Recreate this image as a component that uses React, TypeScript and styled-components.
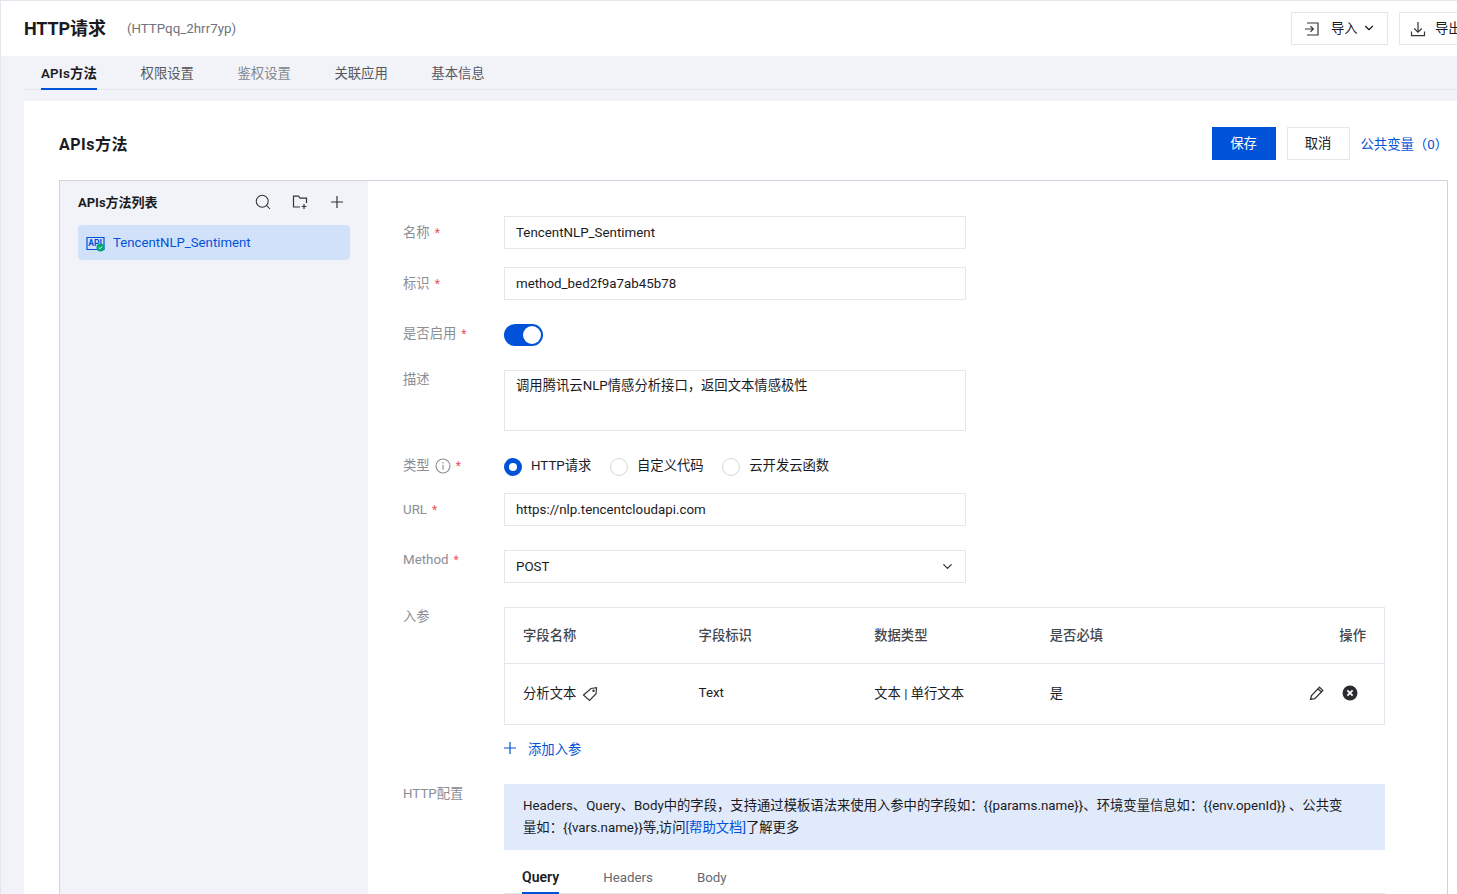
import React from "react";
import styled, { createGlobalStyle } from "styled-components";
import { ChevronDown, Search } from "lucide-react";

const GlobalStyle = createGlobalStyle`
  html, body {
    margin: 0;
    padding: 0;
    height: 100%;
    overflow: hidden;
    background: #f2f3f8;
  }
  * {
    box-sizing: border-box;
  }
  body {
    font-family: Roboto, "Noto Sans CJK SC", sans-serif;
    font-size: 13.33px;
    color: #1a1b1f;
  }
`;

const Page = styled.div`
  width: 1457px;
  height: 894px;
  overflow: hidden;
  border-top: 1px solid #e4e6ee;
  border-left: 1px solid #e4e6ee;
  background: #f2f3f8;
`;

const Header = styled.header`
  height: 55px;
  background: #fff;
  display: flex;
  align-items: center;
  padding-left: 23px;
  width: 1520px;
`;

const TitleGroup = styled.div`
  flex: 0 0 1267px;
  display: flex;
  align-items: center;
  gap: 21px;
`;

const Title = styled.h1`
  margin: 0;
  font-size: 18px;
  line-height: 24px;
  font-weight: 700;
  letter-spacing: -0.1px;
  color: #1a1a1f;
`;

const SubTitle = styled.span`
  color: #70737b;
`;

const HeaderButton = styled.button<{ $pad: number; $gap: number }>`
  flex: 0 0 97px;
  height: 33px;
  margin-right: 11px;
  border: 1px solid #e4e6ee;
  background: #fff;
  padding: 0 0 2px ${props => props.$pad}px;
  display: flex;
  align-items: center;
  gap: ${props => props.$gap}px;
  font: inherit;
  color: #1a1b1f;
`;

const ButtonChevron = styled(ChevronDown)`
  margin-left: -7px;
`;

const TabBar = styled.nav`
  height: 34px;
  margin-left: 23px;
  padding-left: 17px;
  display: flex;
  gap: 43.6px;
  border-bottom: 1px solid #e4e6ee;
`;

const TabItem = styled.span<{ $active?: boolean; $muted?: boolean }>`
  height: 34px;
  padding-top: 1px;
  line-height: 33px;
  font-weight: ${props => (props.$active ? 600 : 400)};
  letter-spacing: ${props => (props.$active ? "0.2px" : "0")};
  color: ${props => (props.$active ? "#1a1b1f" : props.$muted ? "#84878f" : "#55585f")};
  border-bottom: ${props => (props.$active ? "2px solid #0052d9" : "none")};
`;

const Card = styled.main`
  margin: 11px 0 0 23px;
  height: 800px;
  background: #fff;
  padding: 26px 0 0 35px;
`;

const CardHead = styled.div`
  height: 33px;
  display: flex;
  align-items: center;
  padding-right: 9px;
`;

const CardTitle = styled.h2`
  margin: 0 auto 2px 0;
  font-size: 16px;
  font-weight: 700;
  letter-spacing: 0.5px;
  color: #1a1a1f;
`;

const PrimaryButton = styled.button`
  width: 64px;
  height: 33px;
  border: none;
  padding: 0 0 2px;
  background: #0052d9;
  color: #fff;
  font: inherit;
  margin-right: 11px;
`;

const GhostButton = styled.button`
  width: 63px;
  height: 33px;
  border: 1px solid #e4e6ee;
  padding: 0 0 2px;
  background: #fff;
  color: #1a1b1f;
  font: inherit;
  margin-right: 11px;
`;

const LinkText = styled.span`
  color: #0052d9;
  white-space: pre;
`;

const Panel = styled.section`
  margin: 20px 9px 0 0;
  height: 720px;
  border: 1px solid #d0d3de;
  display: flex;
`;

const Sidebar = styled.aside`
  flex: 0 0 308px;
  background: #f2f3f8;
  padding: 10px 18px 0 18px;
`;

const SideHead = styled.div`
  height: 22px;
  display: flex;
  align-items: center;
`;

const SideTitle = styled.span`
  flex: 1;
  padding-bottom: 2px;
  font-size: 13px;
  font-weight: 700;
  color: #1a1b1f;
`;

const SideIcons = styled.div`
  display: flex;
  align-items: center;
  gap: 20px;
  margin-right: 7px;
  color: #33353a;
`;

const SideItem = styled.div`
  margin-top: 12px;
  height: 35px;
  background: #d2e1fa;
  border-radius: 4px;
  display: flex;
  align-items: center;
  gap: 7px;
  padding-left: 8px;
  font-size: 13.2px;
  color: #0052d9;
`;

const Form = styled.div`
  flex: 1;
  padding: 35px 0 0 35px;
`;

const Row = styled.div<{ $top?: number; $height?: number }>`
  display: flex;
  margin-top: ${props => props.$top ?? 0}px;
  min-height: ${props => props.$height ?? 33}px;
`;

const Label = styled.div<{ $offset?: number }>`
  flex: 0 0 101px;
  padding-top: ${props => props.$offset ?? 8}px;
  line-height: 18px;
  color: #8b8e95;
  display: flex;
  align-items: flex-start;
  gap: 5px;
`;

const Star = styled.span`
  color: #e8555a;
  font-size: 12px;
  line-height: 18px;
`;

const Field = styled.div`
  width: 462px;
  height: 33px;
  border: 1px solid #e4e6ee;
  padding: 0 11px;
  display: flex;
  align-items: center;
  justify-content: space-between;
  color: #1a1b1f;
`;

const TextArea = styled(Field)`
  height: 61px;
  align-items: flex-start;
  padding-top: 6px;
  line-height: 18px;
`;

const FieldChevron = styled(ChevronDown)`
  margin-right: -1px;
  color: #33353a;
`;

const Toggle = styled.div`
  width: 39px;
  height: 22px;
  border-radius: 11px;
  background: #0052d9;
  display: flex;
  align-items: center;
  justify-content: flex-end;
  padding-right: 2px;
`;

const Knob = styled.span`
  width: 18px;
  height: 18px;
  border-radius: 50%;
  background: #fff;
`;

const RadioGroup = styled.div`
  display: flex;
  align-items: flex-start;
  height: 18px;
`;

const RadioItem = styled.label`
  display: flex;
  align-items: flex-start;
  gap: 9px;
  margin-right: 18.6px;
  line-height: 18px;
`;

const RadioDot = styled.span<{ $checked?: boolean }>`
  width: 18px;
  height: 18px;
  margin-top: 1px;
  border-radius: 50%;
  background: #fff;
  border: ${props => (props.$checked ? "5px solid #0052d9" : "1px solid #d5d8e2")};
`;

const Content = styled.div`
  width: 881px;
`;

const Table = styled.div`
  border: 1px solid #e4e6ee;
`;

const TableRow = styled.div<{ $head?: boolean }>`
  display: grid;
  grid-template-columns: 175.6px 175.6px 175.6px 1fr 100px;
  align-items: center;
  padding: 0 18px ${props => (props.$head ? 2 : 3)}px;
  height: ${props => (props.$head ? 56 : 60)}px;
  font-weight: ${props => (props.$head ? 500 : 400)};
  color: ${props => (props.$head ? "#44474e" : "#1a1b1f")};
  border-bottom: ${props => (props.$head ? "1px solid #e4e6ee" : "none")};
`;

const Cell = styled.div<{ $right?: boolean }>`
  display: flex;
  align-items: center;
  gap: 6px;
  justify-content: ${props => (props.$right ? "flex-end" : "flex-start")};
`;

const ActionIcons = styled(Cell)`
  gap: 17px;
  color: #33353a;
  padding-right: 8px;
`;

const AddRow = styled.div`
  display: flex;
  align-items: center;
  gap: 12px;
  height: 18px;
  margin-top: 14px;
  color: #0052d9;
`;

const Notice = styled.div`
  height: 66px;
  background: #e1eafb;
  padding: 11px 38px 0 19px;
  line-height: 22px;
  color: #1a1b1f;
`;

const SubTabs = styled.div`
  height: 44px;
  padding-left: 18px;
  display: flex;
  gap: 44px;
  border-bottom: 1px solid #e4e6ee;
`;

const SubTab = styled.span<{ $active?: boolean }>`
  height: 44px;
  padding-top: ${props => (props.$active ? 18 : 19)}px;
  line-height: 18px;
  font-size: ${props => (props.$active ? "14px" : "13.33px")};
  font-weight: ${props => (props.$active ? 600 : 400)};
  color: ${props => (props.$active ? "#1a1b1f" : "#66696f")};
  border-bottom: ${props => (props.$active ? "2px solid #0052d9" : "none")};
`;

const Link = styled.span`
  color: #0052d9;
`;

const IconSvg = styled.svg<{ $top?: number; $right?: number }>`
  flex: none;
  margin-top: ${props => props.$top ?? 0}px;
  margin-right: ${props => props.$right ?? 0}px;
`;

const ImportIcon = () => (
  <IconSvg $top={3} width="16" height="16" viewBox="0 0 16 16" fill="none" stroke="#33353a" strokeWidth="1.2">
    <path d="M3 2h11v12H3M1 8h8M6.5 5.2 9.3 8l-2.8 2.8" />
  </IconSvg>
);

const ExportIcon = () => (
  <IconSvg $top={3} width="16" height="16" viewBox="0 0 16 16" fill="none" stroke="#33353a" strokeWidth="1.2">
    <path d="M8 1v10M4.2 7.5 8 11.2l3.8-3.7M1.5 10.5v4.2h13v-4.2" />
  </IconSvg>
);

const FolderAddIcon = () => (
  <IconSvg $right={3} width="16" height="16" viewBox="0 0 16 16" fill="none" stroke="#33353a" strokeWidth="1.2">
    <path d="M8 13H1.5V2.2h5l1.6 1.9h6.4V9M12 10v5M9.6 12.5h4.9" />
  </IconSvg>
);

const PlusIcon = ({ size }: { size: number }) => (
  <IconSvg width={size} height={size} viewBox={`0 0 ${size} ${size}`} fill="none" stroke="currentColor" strokeWidth="1.2">
    <path d={`M${size / 2} 0v${size}M0 ${size / 2}h${size}`} />
  </IconSvg>
);

const ApiIcon = () => (
  <IconSvg width="20" height="18" viewBox="0 0 20 18">
    <path d="M1 3.5h17v12H1z" fill="none" stroke="#0052d9" strokeWidth="1.2" />
    <text x="2.2" y="12" fontSize="8.5" fontWeight="700" fill="#0052d9" fontFamily="Roboto, sans-serif">API</text>
    <circle cx="14.5" cy="13.5" r="4" fill="#00a870" />
    <path d="M12.8 13.5l1.2 1.2 2.1-2.2" fill="none" stroke="#fff" strokeWidth="1" />
  </IconSvg>
);

const InfoIcon = () => (
  <IconSvg $top={1} width="16" height="16" viewBox="0 0 16 16" fill="none" stroke="#8b8e95" strokeWidth="1.1">
    <circle cx="8" cy="8" r="7" />
    <path d="M8 6.8v5M8 4v1.5" />
  </IconSvg>
);

const TagIcon = () => (
  <IconSvg $top={3} width="16" height="16" viewBox="0 0 16 16" fill="none" stroke="#33353a" strokeWidth="1.2">
    <path d="M1.5 9 9 2.5l5.5-.8-.4 6L7.5 14.5z" />
    <circle cx="11.5" cy="4.7" r=".6" />
  </IconSvg>
);

const PencilIcon = () => (
  <IconSvg width="16" height="16" viewBox="0 0 16 16" fill="none" stroke="#33353a" strokeWidth="1.3">
    <path d="M1.5 14.5 2.5 10.5 10.5 2.2l3.3 3.2-8 8.2zM9 3.8l3.3 3.2" />
  </IconSvg>
);

const RemoveIcon = () => (
  <IconSvg width="16" height="16" viewBox="0 0 16 16">
    <circle cx="8" cy="8" r="7.5" fill="#2b2c30" />
    <path d="M5.4 5.4l5.2 5.2M10.6 5.4l-5.2 5.2" stroke="#fff" strokeWidth="1.8" />
  </IconSvg>
);

const App = () => {
  return (
    <>
      <GlobalStyle />
      <Page>
        <Header>
          <TitleGroup>
            <Title>HTTP请求</Title>
            <SubTitle>(HTTPqq_2hrr7yp)</SubTitle>
          </TitleGroup>
          <HeaderButton $pad={12} $gap={11}>
            <ImportIcon />
            <span>导入</span>
            <ButtonChevron size={14} />
          </HeaderButton>
          <HeaderButton $pad={10} $gap={9}>
            <ExportIcon />
            <span>导出</span>
          </HeaderButton>
        </Header>
        <TabBar>
          <TabItem $active>APIs方法</TabItem>
          <TabItem>权限设置</TabItem>
          <TabItem $muted>鉴权设置</TabItem>
          <TabItem>关联应用</TabItem>
          <TabItem>基本信息</TabItem>
        </TabBar>
        <Card>
          <CardHead>
            <CardTitle>APIs方法</CardTitle>
            <PrimaryButton>保存</PrimaryButton>
            <GhostButton>取消</GhostButton>
            <LinkText>公共变量（0）</LinkText>
          </CardHead>
          <Panel>
            <Sidebar>
              <SideHead>
                <SideTitle>APIs方法列表</SideTitle>
                <SideIcons>
                  <Search size={18} strokeWidth={1.4} />
                  <FolderAddIcon />
                  <PlusIcon size={12} />
                </SideIcons>
              </SideHead>
              <SideItem>
                <ApiIcon />
                TencentNLP_Sentiment
              </SideItem>
            </Sidebar>
            <Form>
              <Row>
                <Label>名称<Star>*</Star></Label>
                <Field>TencentNLP_Sentiment</Field>
              </Row>
              <Row $top={18}>
                <Label>标识<Star>*</Star></Label>
                <Field>method_bed2f9a7ab45b78</Field>
              </Row>
              <Row $top={24} $height={22}>
                <Label $offset={1}>是否启用<Star>*</Star></Label>
                <Toggle><Knob /></Toggle>
              </Row>
              <Row $top={24}>
                <Label $offset={1}>描述</Label>
                <TextArea>调用腾讯云NLP情感分析接口，返回文本情感极性</TextArea>
              </Row>
              <Row $top={26} $height={18}>
                <Label $offset={0}>类型<InfoIcon /><Star>*</Star></Label>
                <RadioGroup>
                  <RadioItem><RadioDot $checked />HTTP请求</RadioItem>
                  <RadioItem><RadioDot />自定义代码</RadioItem>
                  <RadioItem><RadioDot />云开发云函数</RadioItem>
                </RadioGroup>
              </Row>
              <Row $top={18}>
                <Label>URL<Star>*</Star></Label>
                <Field>https://nlp.tencentcloudapi.com</Field>
              </Row>
              <Row $top={24}>
                <Label $offset={1}>Method<Star>*</Star></Label>
                <Field>POST<FieldChevron size={15} /></Field>
              </Row>
              <Row $top={24}>
                <Label $offset={1}>入参</Label>
                <Content>
                  <Table>
                    <TableRow $head>
                      <Cell>字段名称</Cell>
                      <Cell>字段标识</Cell>
                      <Cell>数据类型</Cell>
                      <Cell>是否必填</Cell>
                      <Cell $right>操作</Cell>
                    </TableRow>
                    <TableRow>
                      <Cell>分析文本<TagIcon /></Cell>
                      <Cell>Text</Cell>
                      <Cell>文本 | 单行文本</Cell>
                      <Cell>是</Cell>
                      <ActionIcons $right><PencilIcon /><RemoveIcon /></ActionIcons>
                    </TableRow>
                  </Table>
                  <AddRow><PlusIcon size={12} />添加入参</AddRow>
                </Content>
              </Row>
              <Row $top={27}>
                <Label $offset={1}>HTTP配置</Label>
                <Content>
                  <Notice>
                    Headers、Query、Body中的字段，支持通过模板语法来使用入参中的字段如：{"{{params.name}}"}、环境变量信息如：{"{{env.openId}}"} 、公共变量如：{"{{vars.name}}"}等,访问<Link>[帮助文档]</Link>了解更多
                  </Notice>
                  <SubTabs>
                    <SubTab $active>Query</SubTab>
                    <SubTab>Headers</SubTab>
                    <SubTab>Body</SubTab>
                  </SubTabs>
                </Content>
              </Row>
            </Form>
          </Panel>
        </Card>
      </Page>
    </>
  );
};

export default App;
